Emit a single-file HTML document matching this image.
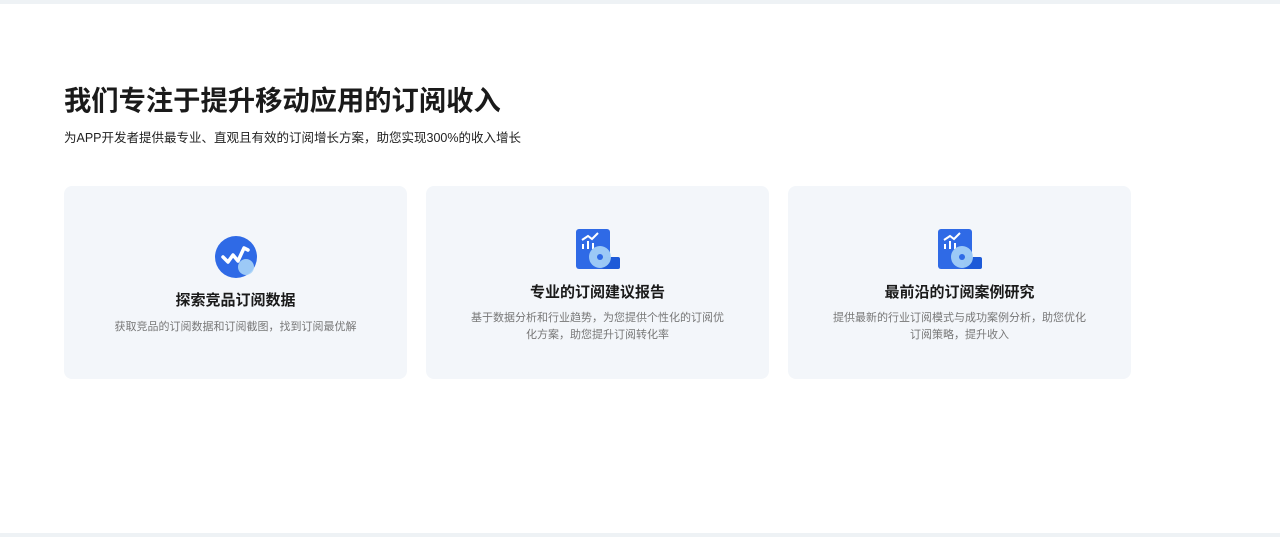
<!DOCTYPE html><html><head><meta charset="utf-8"><style>
body{margin:0;width:1280px;height:537px;background:#fff;font-family:"Liberation Sans","Noto Sans CJK SC",sans-serif;position:relative;overflow:hidden}
.top{position:absolute;left:0;top:0;width:1280px;height:4px;background:#eef2f5}
.bot{position:absolute;left:0;top:533px;width:1280px;height:4px;background:#eef2f5}
h1{position:absolute;left:64px;top:81px;margin:0;font-size:27.3px;font-weight:700;color:#1a1a1a;line-height:40px}
.sub{position:absolute;left:64px;top:128px;font-size:12.5px;color:#222;line-height:20px}
.card{position:absolute;top:186px;width:343px;height:193px;background:#f3f6fa;border-radius:8px;text-align:center}
.card svg{position:absolute;left:150px}
.t{position:absolute;left:0;right:0;font-size:15px;font-weight:700;color:#1a1a1a;line-height:20px}
.d{position:absolute;left:42px;right:42px;font-size:11px;color:#777;line-height:17px}
</style></head><body>
<div class="top"></div><div class="bot"></div>
<h1>我们专注于提升移动应用的订阅收入</h1>
<div class="sub">为APP开发者提供最专业、直观且有效的订阅增长方案，助您实现300%的收入增长</div>
<div class="card" style="left:64px">
<svg style="top:50px" width="46" height="42" viewBox="0 0 46 42"><circle cx="22" cy="21" r="21" fill="#2f6ae6"/><path d="M9 21l5 5 5-7 5 6 6-13 4 2" stroke="#fff" stroke-width="3.5" fill="none" stroke-linecap="round" stroke-linejoin="round"/><circle cx="32" cy="31" r="8" fill="#a9d4f7" opacity=".9"/></svg>
<div class="t" style="top:105px">探索竞品订阅数据</div>
<div class="d" style="top:133px">获取竞品的订阅数据和订阅截图，找到订阅最优解</div></div>
<div class="card" style="left:426px">
<svg style="top:43px" width="46" height="42" viewBox="0 0 46 42"><rect x="0" y="0" width="34" height="40" rx="3" fill="#2f6ae6"/><rect x="26" y="28" width="18" height="12" rx="2" fill="#1d5ad8"/><path d="M7 20v-5M12 20v-8M17 20v-6M6 11l6-4 4 3 6-6" stroke="#fff" stroke-width="2" fill="none"/><circle cx="24" cy="28" r="11" fill="#a9d4f7" opacity=".9"/><circle cx="24" cy="28" r="3" fill="#2f6ae6"/></svg>
<div class="t" style="top:97px">专业的订阅建议报告</div>
<div class="d" style="top:124px">基于数据分析和行业趋势，为您提供个性化的订阅优<br>化方案，助您提升订阅转化率</div></div>
<div class="card" style="left:788px">
<svg style="top:43px" width="46" height="42" viewBox="0 0 46 42"><rect x="0" y="0" width="34" height="40" rx="3" fill="#2f6ae6"/><rect x="26" y="28" width="18" height="12" rx="2" fill="#1d5ad8"/><path d="M7 20v-5M12 20v-8M17 20v-6M6 11l6-4 4 3 6-6" stroke="#fff" stroke-width="2" fill="none"/><circle cx="24" cy="28" r="11" fill="#a9d4f7" opacity=".9"/><circle cx="24" cy="28" r="3" fill="#2f6ae6"/></svg>
<div class="t" style="top:97px">最前沿的订阅案例研究</div>
<div class="d" style="top:124px">提供最新的行业订阅模式与成功案例分析，助您优化<br>订阅策略，提升收入</div></div>
</body></html>
